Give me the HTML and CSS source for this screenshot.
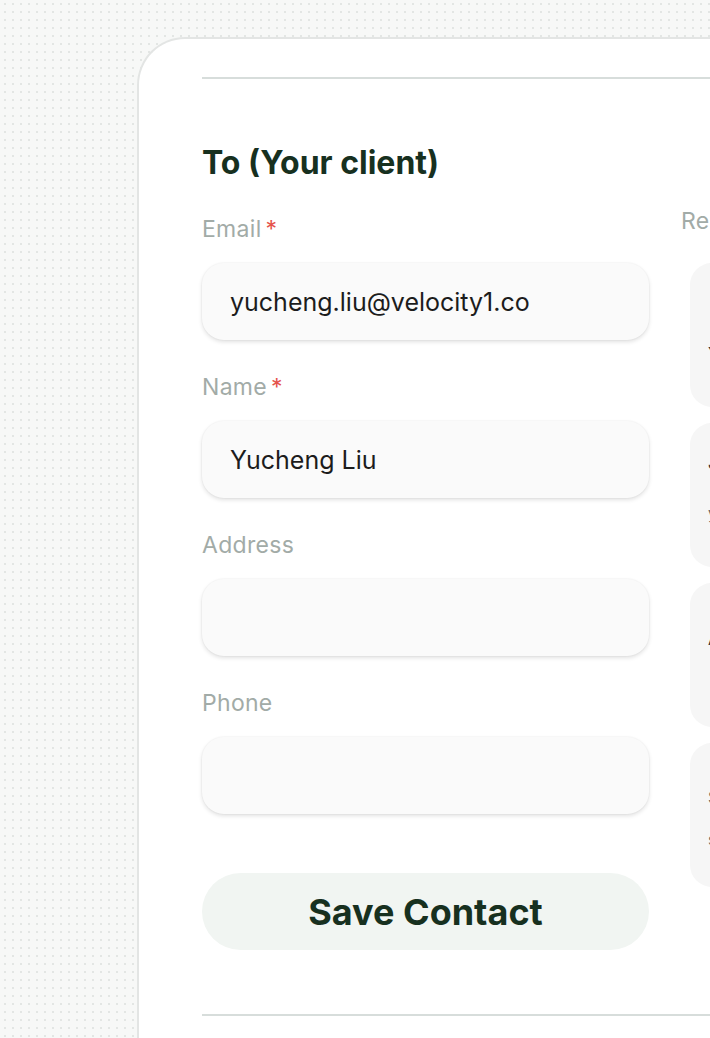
FILE: index.html
```html
<!DOCTYPE html>
<html lang="en">
<head>
<meta charset="utf-8">
<title>Invoice contact</title>
<link rel="stylesheet" href="styles.css">
</head>
<body>
<div class="card">
  <div class="divider"></div>
  <div class="columns">
    <section class="col-left">
      <h2 class="heading">To (Your client)</h2>
      <div class="field">
        <div class="label">Email<span class="req">*</span></div>
        <div class="input">yucheng.liu@velocity1.co</div>
      </div>
      <div class="field">
        <div class="label">Name<span class="req">*</span></div>
        <div class="input">Yucheng Liu</div>
      </div>
      <div class="field">
        <div class="label">Address</div>
        <div class="input"></div>
      </div>
      <div class="field">
        <div class="label">Phone</div>
        <div class="input"></div>
      </div>
      <button class="save">Save Contact</button>
    </section>
    <section class="col-right">
      <div class="label label-right">Recent contacts</div>
      <div class="box box-a"><span class="line">Yucheng Liu</span></div>
      <div class="box box-b"><span class="line">Jane Park</span><span class="line muted">yucheng.liu@velocity1.co</span></div>
      <div class="box box-c"><span class="line">Alex Chen</span></div>
      <div class="box box-d"><span class="line muted">Sam Rivera</span><span class="line muted">sam@rivera.co</span></div>
    </section>
  </div>
  <div class="divider bottom"></div>
</div>
</body>
</html>
```

FILE: styles.css
```css
* { box-sizing: border-box; }
html, body { margin: 0; padding: 0; }
body {
  width: 710px;
  height: 1038px;
  overflow: hidden;
  font-family: Inter, "Liberation Sans", sans-serif;
  background-color: #f7f8f7;
  background-image: radial-gradient(circle, #e3e6e4 1px, transparent 1.4px);
  background-size: 8px 8px;
  background-position: 1px 0px;
}
.card {
  margin: 37px 0 0 137px;
  width: 820px;
  height: 1100px;
  background: #fff;
  border: 2px solid #e3e5e4;
  border-right: none;
  border-bottom: none;
  border-radius: 48px 0 0 0;
  padding: 38px 0 0 63px;
}
.divider {
  height: 2px;
  background: #d7dddb;
}
.divider.bottom { margin-top: 64px; }
.columns {
  display: grid;
  grid-template-columns: 447px 300px;
  column-gap: 32px;
}
.heading {
  margin: 64px 0 32px;
  font-size: 32px;
  line-height: 40px;
  font-weight: 700;
  letter-spacing: 0;
  color: #17301f;
}
.label {
  font-size: 23px;
  line-height: 28px;
  color: #a2aba7;
  letter-spacing: 0.3px;
}
.req { color: #e5534b; margin-left: 4px; }
.field .label { margin-bottom: 20px; }
.field { margin-bottom: 33px; }
.input {
  height: 77px;
  border-radius: 22px;
  background: #fafafa;
  box-shadow: 0 2px 4px rgba(0,0,0,0.12), 0 0 0 1px rgba(0,0,0,0.02);
  padding: 0 28px;
  display: flex;
  align-items: center;
  font-size: 25px;
  color: #1c1c1c;
  letter-spacing: 0;
}
.save {
  display: block;
  width: 100%;
  margin-top: 59px;
  height: 77px;
  border: none;
  border-radius: 39px;
  background: #f1f5f2;
  font-family: Inter, "Liberation Sans", sans-serif;
  font-size: 36px;
  font-weight: 700;
  letter-spacing: 0;
  color: #17301f;
}
.col-right {
  padding-top: 128px;
  display: flex;
  flex-direction: column;
}
.label-right { margin-bottom: 28px; }
.box {
  margin-left: 9px;
  height: 144px;
  border-radius: 22px;
  background: #f6f6f6;
  margin-bottom: 16px;
  padding: 0 18px;
  display: flex;
  flex-direction: column;
  font-size: 16px;
  color: #333;
}
.box-a { padding-top: 80px; }
.box-b { padding-top: 30px; gap: 30px; }
.box-c { padding-top: 46px; }
.box-d { padding-top: 44px; gap: 22px; }
.muted { color: #666; }
```
